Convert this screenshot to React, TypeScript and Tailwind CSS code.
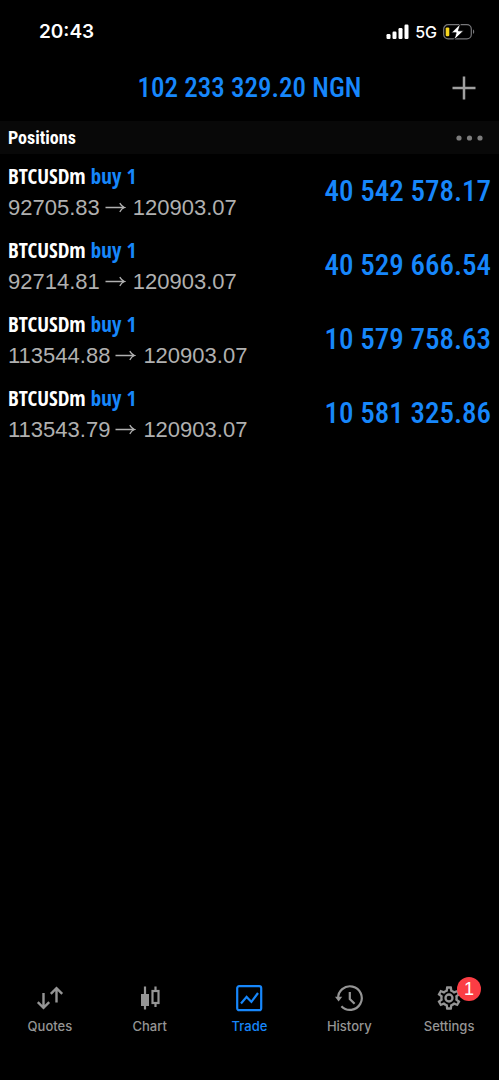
import React from "react";

type Position = { id: number; open: string; current: string; profit: string };

const positions: Position[] = [
  { id: 1, open: "92705.83", current: "120903.07", profit: "40 542 578.17" },
  { id: 2, open: "92714.81", current: "120903.07", profit: "40 529 666.54" },
  { id: 3, open: "113544.88", current: "120903.07", profit: "10 579 758.63" },
  { id: 4, open: "113543.79", current: "120903.07", profit: "10 581 325.86" },
];

function StatusBar() {
  return (
    <div className="flex h-16 items-center justify-between pr-6 pl-[39px] font-['Inter',sans-serif]">
      <span className="text-[19px] font-semibold">20:43</span>
      <div className="flex items-center gap-1.5">
        <svg className="h-4 w-[23px]" viewBox="0 0 23 16" fill="currentColor" aria-hidden="true">
          <rect x="0.500" y="10" width="4" height="5" rx="1.2" />
          <rect x="6.500" y="7.5" width="4" height="7.5" rx="1.2" />
          <rect x="12.500" y="4" width="4" height="11" rx="1.2" />
          <rect x="18.500" y="0.5" width="4" height="14.5" rx="1.2" />
        </svg>
        <span className="text-base font-medium">5G</span>
        <svg className="h-4 w-8" viewBox="0 0 32 16" fill="none" aria-hidden="true">
          <rect x="0.7" y="0.7" width="27.6" height="14.2" rx="4.4" stroke="#77777a" strokeWidth="1.2" />
          <path d="M30 5.6c1.6.6 1.6 3.8 0 4.4z" fill="#77777a" />
          <rect x="2.7" y="3.4" width="3.6" height="8.8" rx="1.2" fill="#f7d61f" />
          <path d="M17.5-.3 8.400 8.800h4.800l-2.200 7.200 9.600-9.200h-5.200z" fill="#fff" stroke="#000" strokeWidth="0.8" />
        </svg>
      </div>
    </div>
  );
}

function PriceArrow() {
  return (
    <svg
      className="mr-[7px] ml-[5px] h-3 w-[21px]"
      viewBox="0 0 21 12"
      fill="none"
      stroke="currentColor"
      strokeWidth="1.3"
      role="img"
      aria-label="to"
    >
      <path d="M.5 5.500h19M14.800 1.100c1 2 2.600 3.600 4.800 4.400-2.200.8-3.800 2.400-4.800 4.400" />
    </svg>
  );
}

function PositionRow({ position }: { position: Position }) {
  return (
    <li className="flex h-[74px] items-center justify-between px-2">
      <div>
        <p className="font-['Open_Sans_Condensed',sans-serif] text-[21px] leading-[31px] font-bold">
          BTCUSDm <span className="text-[#1787fb]">buy 1</span>
        </p>
        <p className="flex items-center font-['Liberation_Sans',sans-serif] text-[22px] leading-[31px] text-[#b0b0b0]">
          {position.open}
          <PriceArrow />
          {position.current}
        </p>
      </div>
      <p className="font-['Roboto_Condensed',sans-serif] text-[29px] font-medium text-[#1787fb]">{position.profit}</p>
    </li>
  );
}

function QuotesIcon() {
  return (
    <svg className="size-7" viewBox="0 0 28 28" fill="none" stroke="currentColor" strokeWidth="2.4" aria-hidden="true">
      <path d="M7.500 9v14.500M1.800 18.200l5.700 5.700 5.700-5.700M20.500 18.500V4M14.800 9.800l5.700-5.700 5.700 5.700" />
    </svg>
  );
}

function ChartIcon() {
  return (
    <svg className="size-7" viewBox="0 0 28 28" fill="none" stroke="currentColor" strokeWidth="2.2" aria-hidden="true">
      <path d="M9 2.500v23M19.500 2.500v4M19.500 19v4" />
      <rect x="5" y="10" width="8" height="12" fill="currentColor" stroke="none" />
      <rect x="16.500" y="7" width="6" height="12" />
    </svg>
  );
}

function TradeIcon() {
  return (
    <svg className="size-7" viewBox="0 0 28 28" fill="none" stroke="currentColor" strokeWidth="2.2" aria-hidden="true">
      <rect x="2.200" y="2.200" width="24" height="24" rx="2" />
      <path d="m6 19.500 5.600-6.600 4.800 5L23 9" />
    </svg>
  );
}

function HistoryIcon() {
  return (
    <svg className="size-7" viewBox="0 0 28 28" fill="none" stroke="currentColor" strokeWidth="2.2" aria-hidden="true">
      <path d="M3.200 15A11.800 11.800 0 1 1 6.400 22.200" />
      <path d="M0 12.800h7.200l-3.600 4.600z" fill="currentColor" stroke="none" />
      <path d="M14.800 8v7l4.800 4.800" />
    </svg>
  );
}

function SettingsIcon() {
  return (
    <svg className="size-7" viewBox="0 0 24 24" fill="currentColor" aria-hidden="true">
      <path d="M19.430 12.980c.040-.320.070-.640.070-.980s-.030-.660-.070-.980l2.110-1.650c.190-.150.240-.420.120-.640l-2-3.460a.500.500 0 0 0-.610-.220l-2.490 1c-.520-.400-1.080-.730-1.690-.980l-.380-2.650A.488.488 0 0 0 14 2h-4c-.250 0-.460.180-.490.420l-.380 2.650c-.610.250-1.170.590-1.690.980l-2.490-1a.566.566 0 0 0-.180-.030c-.170 0-.340.090-.430.250l-2 3.460c-.130.220-.070.490.120.640l2.110 1.650c-.040.320-.070.650-.070.980s.030.660.070.980l-2.110 1.650c-.190.150-.240.420-.120.640l2 3.460a.500.500 0 0 0 .610.220l2.490-1c.520.400 1.080.730 1.690.980l.380 2.650c.030.240.240.420.490.420h4c.250 0 .460-.180.490-.420l.380-2.650c.610-.250 1.170-.590 1.690-.980l2.490 1c.060.020.120.030.180.030.170 0 .340-.090.430-.250l2-3.460c.120-.220.070-.490-.120-.640l-2.110-1.650zm-1.980-1.710c.040.310.050.520.050.730s-.020.430-.050.730l-.140 1.130.890.700 1.080.840-.700 1.210-1.270-.510-1.040-.420-.900.680c-.430.320-.840.560-1.250.730l-1.060.430-.160 1.130-.200 1.350h-1.400l-.190-1.350-.160-1.130-1.060-.430c-.430-.180-.830-.410-1.230-.710l-.910-.700-1.060.430-1.270.510-.700-1.210 1.080-.840.890-.700-.140-1.130c-.030-.310-.050-.540-.050-.740s.020-.430.050-.730l.140-1.130-.890-.700-1.080-.840.700-1.210 1.270.510 1.040.420.900-.680c.430-.320.840-.560 1.250-.730l1.060-.430.160-1.130.200-1.350h1.390l.190 1.350.160 1.130 1.060.430c.430.180.830.410 1.230.710l.910.700 1.060-.430 1.270-.510.700 1.210-1.070.850-.890.700.140 1.130zM12 8a4 4 0 1 0 0 8 4 4 0 0 0 0-8zm0 6a2 2 0 1 1 0-4 2 2 0 0 1 0 4z" />
    </svg>
  );
}

const tabs = [
  { label: "Quotes", Icon: QuotesIcon },
  { label: "Chart", Icon: ChartIcon },
  { label: "Trade", Icon: TradeIcon, active: true },
  { label: "History", Icon: HistoryIcon },
  { label: "Settings", Icon: SettingsIcon, badge: 1 },
];

export default function App() {
  return (
    <div className="flex min-h-screen flex-col bg-black text-white">
      <StatusBar />
      <header className="grid h-[57px] grid-cols-[1fr_auto_1fr] items-center px-[23px] pb-[9px]">
        <h1 className="col-start-2 font-['Roboto_Condensed',sans-serif] text-[27px] font-medium text-[#1787fb]">
          102 233 329.20 NGN
        </h1>
        <button type="button" aria-label="New order" className="justify-self-end text-[#a0a0a0]">
          <svg className="block size-6" viewBox="0 0 24 24" stroke="currentColor" strokeWidth="2.5" aria-hidden="true">
            <path d="M12 .5v23M.5 12h23" />
          </svg>
        </button>
      </header>
      <main className="flex-1">
        <div className="flex h-[33px] items-center justify-between bg-[#080808] pr-4 pl-2">
          <h2 className="font-['Roboto_Condensed',sans-serif] text-lg font-bold">Positions</h2>
          <button type="button" aria-label="More options" className="text-[#7c7c7c]">
            <svg className="h-2 w-[27px]" viewBox="0 0 27 8" fill="currentColor" aria-hidden="true">
              <circle cx="3" cy="4" r="2.6" />
              <circle cx="13.5" cy="4" r="2.6" />
              <circle cx="24" cy="4" r="2.6" />
            </svg>
          </button>
        </div>
        <ul className="pt-px">
          {positions.map((p) => (
            <PositionRow key={p.id} position={p} />
          ))}
        </ul>
      </main>
      <nav className="grid grid-cols-5 pb-11">
        {tabs.map(({ label, Icon, active, badge }) => (
          <a
            key={label}
            href="#"
            className={`flex flex-col items-center gap-1 font-['Inter',sans-serif] text-[13px] leading-5 font-medium ${active ? "text-[#1787fb]" : "text-[#959595]"}`}
          >
            <span className="relative">
              <Icon />
              {badge && (
                <span className="absolute -top-[7px] -right-[18px] flex size-6 items-center justify-center rounded-full bg-[#fb3d44] font-['Liberation_Sans',sans-serif] text-lg font-normal text-white">
                  {badge}
                </span>
              )}
            </span>
            {label}
          </a>
        ))}
      </nav>
    </div>
  );
}
